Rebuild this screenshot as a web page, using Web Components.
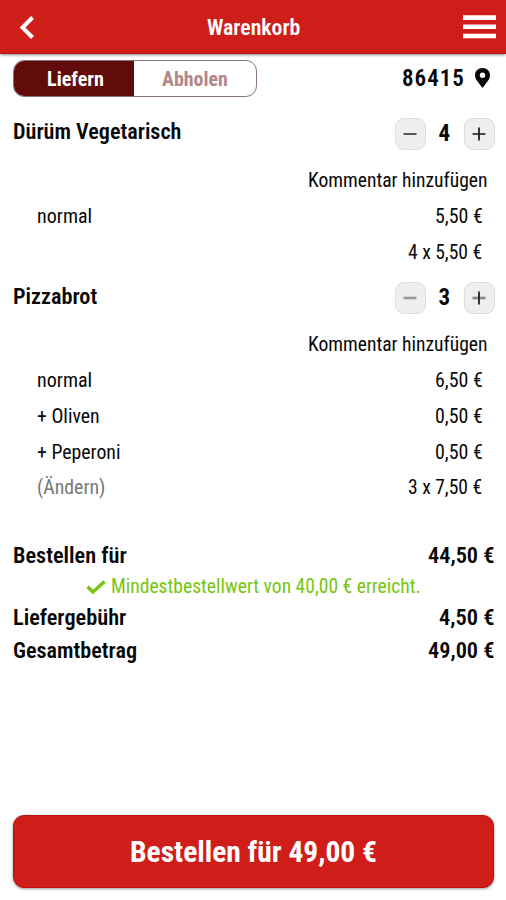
<!DOCTYPE html>
<html lang="de">
<head>
<meta charset="utf-8">
<title>Warenkorb</title>
<style>
  body {
    margin: 0;
    background: #fff;
    color: #080808;
    font-family: "Roboto Condensed", Roboto, "Liberation Sans", sans-serif;
    font-stretch: 75%;
  }
</style>
</head>
<body>
<cart-page></cart-page>

<script>
// Shared base: attaches an open shadow root and fills it with the markup
class BaseElement extends HTMLElement {
  render(html) {
    if (!this.shadowRoot) this.attachShadow({ mode: "open" });
    this.shadowRoot.innerHTML = html;
  }
}

/* One line of narrow text, fitted to the width given in "w" */
class FitText extends BaseElement {
  connectedCallback() {
    const width = Number(this.getAttribute("w"));
    this.render(`
      <style>
        :host {
          display: block;
          flex: none;
          width: ${width}px;
          font-size: ${this.getAttribute("size") || 20}px;
          line-height: 1.2;
          white-space: nowrap;
        }
        span { display: inline-block; transform-origin: 0 50%; }
      </style>
      <span><slot></slot></span>
    `);
    const span = this.shadowRoot.querySelector("span");
    span.style.transform = `scaleX(${width / span.offsetWidth})`;
  }
}

class CartHeader extends BaseElement {
  connectedCallback() {
    this.render(`
      <style>
        :host {
          display: flex;
          align-items: center;
          justify-content: space-between;
          box-sizing: border-box;
          height: 54px;
          padding: 1px 10px 0 19px;
          background: #cf1e1a;
          border-bottom: 1px solid #c10d0b;
          box-shadow: 0 1px 3px rgba(0, 0, 0, .45);
          color: #fff;
          font-weight: 600;
        }
        svg { display: block; }
        .back { margin-right: 8px; }
      </style>
      <svg class="back" width="16" height="25" viewBox="0 0 16 25">
        <path d="M13.5 2.5 3.5 12.5l10 10" fill="none" stroke="#fff" stroke-width="4"/>
      </svg>
      <fit-text w="93" size="22.5"><slot></slot></fit-text>
      <svg width="33" height="24" viewBox="0 0 33 24">
        <path d="M0 2.6h33M0 11.8h33M0 21h33" stroke="#fff" stroke-width="4.6"/>
      </svg>
    `);
  }
}

class DeliveryToggle extends BaseElement {
  connectedCallback() {
    this.render(`
      <style>
        :host {
          display: flex;
          box-sizing: border-box;
          width: 244px;
          height: 37px;
          border: 1px solid #8a7678;
          border-radius: 11px;
          overflow: hidden;
          font-weight: 700;
        }
        div {
          box-sizing: border-box;
          display: flex;
          align-items: center;
          justify-content: center;
          padding-top: 2px;
        }
        .on { width: 120px; background: #610c0b; color: #fff; padding-left: 2px; }
        .off { flex: 1; color: #b18788; }
      </style>
      <div class="on"><fit-text w="57" size="20.5">Liefern</fit-text></div>
      <div class="off"><fit-text w="66" size="20.5">Abholen</fit-text></div>
    `);
  }
}

class ZipCode extends BaseElement {
  connectedCallback() {
    this.render(`
      <style>
        :host { display: flex; align-items: center; gap: 10px; font-weight: 600; letter-spacing: 1px; }
        svg { display: block; margin-bottom: 1px; }
      </style>
      <fit-text w="63" size="23"><slot></slot></fit-text>
      <svg width="15" height="20" viewBox="0 0 15 20">
        <path fill="#080808" fill-rule="evenodd" d="M7.5 0C3.2 0 0 3.1 0 7.2c0 2.3.8 3.8 2.2 5.9L7.5 20l5.3-6.9C14.2 11 15 9.5 15 7.2 15 3.1 11.8 0 7.5 0Zm0 4.6a2.7 2.7 0 1 1 0 5.4 2.7 2.7 0 0 1 0-5.4Z"/>
      </svg>
    `);
  }
}

/* Minus button, amount, plus button */
class QuantityStepper extends BaseElement {
  connectedCallback() {
    const minus = this.getAttribute("minus") || "#333";
    const plus = this.getAttribute("plus") || "#222";
    const bar = this.getAttribute("bar") || "1.6";
    this.render(`
      <style>
        :host { display: flex; align-items: center; gap: 13px; font-weight: 700; }
        .btn {
          display: grid;
          place-items: center;
          box-sizing: border-box;
          width: 31px;
          height: 32px;
          border: 1px solid #ddd;
          border-radius: 9px;
          background: #efefef;
        }
        svg { display: block; }
      </style>
      <div class="btn">
        <svg width="14" height="14" viewBox="0 0 14 14"><path d="M.5 7h13" stroke="${minus}" stroke-width="${bar}"/></svg>
      </div>
      <fit-text w="12" size="23"><slot></slot></fit-text>
      <div class="btn">
        <svg width="14" height="14" viewBox="0 0 14 14"><path d="M.5 7h13" stroke="${plus}" stroke-width="${bar}"/><path d="M7 .5v13" stroke="#222" stroke-width="1.8"/></svg>
      </div>
    `);
  }
}

class CartItem extends BaseElement {
  connectedCallback() {
    this.render(`
      <style>
        :host { display: block; }
        .head {
          display: flex;
          align-items: center;
          justify-content: space-between;
          height: 56px;
          padding: 0 11.5px 0 12.5px;
          font-weight: 600;
        }
        .name { padding-bottom: 3px; }
        .comment {
          display: flex;
          align-items: center;
          justify-content: flex-end;
          height: 37.3px;
          padding-right: 18px;
        }
      </style>
      <div class="head">
        <div class="name"><slot name="name"></slot></div>
        <slot name="amount"></slot>
      </div>
      <div class="comment"><fit-text w="180" size="19.7">Kommentar hinzufügen</fit-text></div>
      <slot></slot>
    `);
  }
}

class ItemRow extends BaseElement {
  connectedCallback() {
    this.render(`
      <style>
        :host {
          display: flex;
          align-items: center;
          height: 35.6px;
          padding: 0 24px 0 36.5px;
        }
        .price { margin-left: auto; }
      </style>
      <slot></slot>
      <div class="price"><slot name="price"></slot></div>
    `);
  }
}

class SumRow extends BaseElement {
  connectedCallback() {
    this.render(`
      <style>
        :host {
          display: flex;
          align-items: center;
          justify-content: space-between;
          height: 33px;
          padding: 0 11.5px 0 12.5px;
          font-weight: 600;
        }
      </style>
      <slot></slot>
    `);
  }
}

class MinimumNote extends BaseElement {
  connectedCallback() {
    this.render(`
      <style>
        :host {
          display: flex;
          align-items: center;
          justify-content: center;
          gap: 5px;
          height: 29.5px;
          color: #76c50e;
        }
        svg { display: block; }
      </style>
      <svg width="20" height="14" viewBox="0 0 20 14">
        <path d="M1.5 6.7 7 12 18.5 1.5" fill="none" stroke="#76c50e" stroke-width="3.4"/>
      </svg>
      <fit-text w="310" size="19.7"><slot></slot></fit-text>
    `);
  }
}

class OrderButton extends BaseElement {
  connectedCallback() {
    this.render(`
      <style>
        :host {
          display: flex;
          align-items: center;
          justify-content: center;
          box-sizing: border-box;
          height: 73px;
          margin: 0 12px 12px 13px;
          border: 1px solid #c10d0b;
          border-radius: 11px;
          background: #cf1e1a;
          box-shadow: 0 1px 3px rgba(0, 0, 0, .4);
          color: #fff;
          font-weight: 700;
        }
      </style>
      <fit-text w="247" size="30"><slot></slot></fit-text>
    `);
  }
}

class CartPage extends BaseElement {
  connectedCallback() {
    this.render(`
      <style>
        :host { display: flex; flex-direction: column; height: 900px; overflow: hidden; }
        .mode {
          display: flex;
          align-items: center;
          justify-content: space-between;
          height: 37px;
          padding: 6px 16px 8.7px 13px;
        }
        .sums { margin-top: 33.3px; }
        .muted { color: #777; }
        order-button { margin-top: auto; }
      </style>
      <cart-header>Warenkorb</cart-header>
      <div class="mode">
        <delivery-toggle></delivery-toggle>
        <zip-code>86415</zip-code>
      </div>

      <cart-item>
        <fit-text slot="name" w="168.5" size="21.3">Dürüm Vegetarisch</fit-text>
        <quantity-stepper slot="amount">4</quantity-stepper>
        <item-row><fit-text w="55" size="19.7">normal</fit-text><fit-text slot="price" w="47.5" size="19.7">5,50 €</fit-text></item-row>
        <item-row><fit-text slot="price" w="74.5" size="19.7">4 x 5,50 €</fit-text></item-row>
      </cart-item>

      <cart-item>
        <fit-text slot="name" w="84.5" size="21.3">Pizzabrot</fit-text>
        <quantity-stepper slot="amount" minus="#999" plus="#888" bar="2.6">3</quantity-stepper>
        <item-row><fit-text w="55" size="19.7">normal</fit-text><fit-text slot="price" w="47.5" size="19.7">6,50 €</fit-text></item-row>
        <item-row><fit-text w="62.5" size="19.7">+ Oliven</fit-text><fit-text slot="price" w="47.5" size="19.7">0,50 €</fit-text></item-row>
        <item-row><fit-text w="83.5" size="19.7">+ Peperoni</fit-text><fit-text slot="price" w="47.5" size="19.7">0,50 €</fit-text></item-row>
        <item-row><fit-text class="muted" w="68.5" size="19.7">(Ändern)</fit-text><fit-text slot="price" w="74.5" size="19.7">3 x 7,50 €</fit-text></item-row>
      </cart-item>

      <div class="sums">
        <sum-row><fit-text w="113.5" size="21.8">Bestellen für</fit-text><fit-text w="66.5" size="21.8">44,50 €</fit-text></sum-row>
        <minimum-note>Mindestbestellwert von 40,00 € erreicht.</minimum-note>
        <sum-row><fit-text w="113.5" size="21.8">Liefergebühr</fit-text><fit-text w="55.5" size="21.8">4,50 €</fit-text></sum-row>
        <sum-row><fit-text w="124" size="21.8">Gesamtbetrag</fit-text><fit-text w="66.5" size="21.8">49,00 €</fit-text></sum-row>
      </div>

      <order-button>Bestellen für 49,00 €</order-button>
    `);
  }
}

/* fit-text goes first so that it is ready when the others render */
customElements.define("fit-text", FitText);
customElements.define("cart-header", CartHeader);
customElements.define("delivery-toggle", DeliveryToggle);
customElements.define("zip-code", ZipCode);
customElements.define("quantity-stepper", QuantityStepper);
customElements.define("cart-item", CartItem);
customElements.define("item-row", ItemRow);
customElements.define("sum-row", SumRow);
customElements.define("minimum-note", MinimumNote);
customElements.define("order-button", OrderButton);
customElements.define("cart-page", CartPage);
</script>
</body>
</html>
